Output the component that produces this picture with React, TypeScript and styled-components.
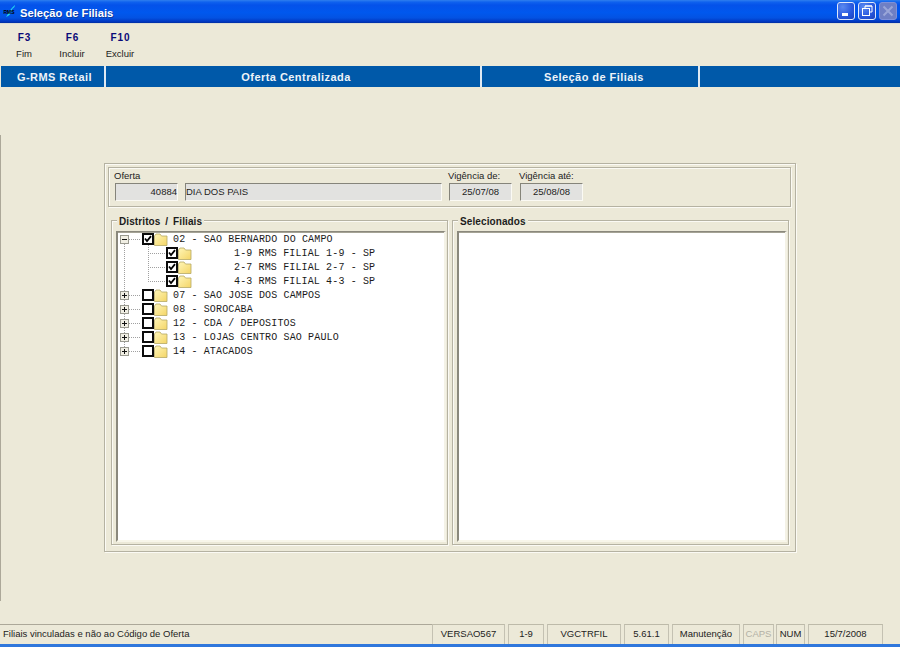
import React from "react";
import styled, { createGlobalStyle } from "styled-components";

const Global = createGlobalStyle`
  html, body { margin: 0; padding: 0; background: #ece9d8; overflow: hidden; }
  * { box-sizing: border-box; }
`;

const Page = styled.div`
  width: 900px; height: 647px; display: flex; flex-direction: column;
  background: #ece9d8; font-family: "Liberation Sans", Arial, sans-serif; color: #111;
`;

const TitleBar = styled.header`
  height: 24px; display: flex; align-items: center; padding: 0 3px 1px 3px;
  background: linear-gradient(180deg, #2f7fee 0%, #0f62ee 9%, #0452ea 22%, #0058ee 55%, #0352e2 78%, #0136bf 94%, #012f9f 100%);
  border-bottom: 1px solid #dcdcd4;
`;
const TitleText = styled.span`
  margin-left: 3px; padding-top: 3px; flex: 1; color: #fff; font-weight: 700; font-size: 11.2px;
  text-shadow: 1px 1px 0 #0b3aa0;
`;
const WinButton = styled.button<{ $off?: boolean }>`
  width: 18px; height: 18px; padding: 0; margin-left: 3px; display: flex; align-items: center; justify-content: center;
  border: 1px solid ${(p) => (p.$off ? "#7f90d8" : "#dfe8fa")}; border-radius: 3px;
  background: ${(p) => p.$off ? "#6f7fc4" : "radial-gradient(circle at 30% 25%, #5b8af0 0%, #2a5ae0 55%, #1a42bd 100%)"};
`;

const Toolbar = styled.nav`
  height: 42px; display: flex;
`;
const Tool = styled.div`
  width: 48px; display: flex; flex-direction: column; align-items: center; padding-top: 7px;
`;
const ToolKey = styled.span`
  height: 13px; line-height: 13px; color: #0a0a78; font-weight: 700; font-size: 10px; letter-spacing: 1px;
  padding-left: 1px;
`;
const ToolName = styled.span`
  margin-top: 4px; height: 12px; line-height: 12px; font-size: 9.5px; color: #222;
`;

const Band = styled.div`
  height: 21px; margin-left: 1px; display: flex; background: #0059a9;
`;
const BandCell = styled.div<{ $w: number; $shift?: number }>`
  width: ${(p) => p.$w}px; flex: none; display: flex; align-items: center; justify-content: center;
  color: #eef3f8; font-weight: 700; font-size: 11px; letter-spacing: 0.45px;
  border-right: 2px solid #dfe9f3; padding-left: ${(p) => p.$shift ?? 0}px;
`;

const Workspace = styled.main`
  margin-top: 48px; height: 466px; border-left: 1px solid #aca899; padding: 28px 0 0 103px;
`;
const OuterPanel = styled.section`
  width: 692px; height: 389px; padding: 3px;
  border: 1px solid #b5b2a2; box-shadow: 1px 1px 0 #fbfaf4, inset 1px 1px 0 #fbfaf4;
`;
const OfferGroup = styled.div`
  width: 683px; height: 40px; display: flex; padding: 2px 0 0 6px;
  border: 1px solid #b5b2a2; box-shadow: 1px 1px 0 #fbfaf4, inset 1px 1px 0 #fbfaf4;
`;
const FieldColumn = styled.div<{ $gap?: number }>`
  margin-right: ${(p) => p.$gap ?? 7}px;
`;
const FieldLabel = styled.div`
  height: 13px; line-height: 12px; font-size: 9.5px; color: #222; margin-left: -1px; white-space: nowrap;
`;
const FieldRow = styled.div`
  display: flex; gap: 7px;
`;
const Field = styled.div<{ $w: number; $align?: string }>`
  width: ${(p) => p.$w}px; height: 18px; line-height: 15px; font-size: 9.5px; color: #222;
  text-align: ${(p) => p.$align ?? "left"}; padding: 0;
  background: #e2e2e0;
  border-style: solid; border-width: 1px; border-color: #85847a #fbfaf4 #fbfaf4 #85847a;
`;
const TreeRow = styled.div`
  display: flex; gap: 4px; margin: 13px 0 0 3px;
`;
const GroupBox = styled.div`
  position: relative; width: 337px; height: 325px; padding: 10px 0 0 4px;
  border: 1px solid #b5b2a2; box-shadow: 1px 1px 0 #fbfaf4, inset 1px 1px 0 #fbfaf4;
`;
const Legend = styled.span`
  position: absolute; top: -5px; left: 5px; padding: 0 2px; background: #ece9d8;
  font-weight: 700; font-size: 10px; line-height: 12px; color: #1c1c1c; letter-spacing: 0.1px; word-spacing: 2px;
`;
const ListBox = styled.div`
  position: relative; width: 330px; height: 311px; background: #fff;
  border-style: solid; border-width: 1px 2px 2px 2px; border-color: #8a887c #f4f2e6 #f8f6ea #8a887c;
  box-shadow: inset 0 1px 0 #a5a395;
`;
const TreeLines = styled.svg`
  position: absolute; left: 0; top: 0;
`;
const Row = styled.div<{ $child?: boolean }>`
  position: relative; height: 14px; display: flex; align-items: center;
  padding-left: ${(p) => (p.$child ? 48 : 2)}px;
`;
const ExpanderGap = styled.span`
  width: 22px; height: 9px; display: flex;
`;
const RowLabel = styled.span<{ $child?: boolean }>`
  margin-left: ${(p) => (p.$child ? 42 : 5)}px; white-space: pre;
  font-family: "Liberation Mono", "Courier New", monospace; font-size: 10px; letter-spacing: 0.14px; color: #1a1a1a;
`;

const Status = styled.footer`
  margin-top: 23px; height: 20px; display: flex;
`;
const StatusText = styled.div`
  width: 432px; flex: none; font-size: 9.5px; line-height: 18px; padding-left: 3px; color: #222;
  border-top: 1px solid #aca899;
`;
const StatusCell = styled.div<{ $w: number; $gap?: number; $dim?: boolean }>`
  width: ${(p) => p.$w}px; flex: none; margin-right: ${(p) => p.$gap ?? 3}px; text-align: center; font-size: 9.5px; line-height: 18px;
  color: ${(p) => (p.$dim ? "#b3b1a6" : "#222")};
  border-top: 1px solid #bdbaa9; border-left: 1px solid #c4c1b2; border-right: 1px solid #c4c1b2;
`;
const BottomEdge = styled.div`
  height: 3px; background: #2f77dc;
`;

const Check = ({ on }: { on: boolean }) => (
  <svg width="12" height="12" viewBox="0 0 12 12" style={{ flex: "none" }}>
    <rect x="1" y="1" width="10" height="10" fill="#fff" stroke="#0c0c0c" strokeWidth="2" />
    {on && <path d="M3 5.5 L5 8 L9 3.2" fill="none" stroke="#000" strokeWidth="1.8" />}
  </svg>
);
const Folder = () => (
  <svg width="14" height="13" viewBox="0 0 14 13" style={{ flex: "none" }}>
    <defs>
      <linearGradient id="fold" x1="0" y1="0" x2="1" y2="1">
        <stop offset="0" stopColor="#fff6b8" />
        <stop offset="1" stopColor="#f4d566" />
      </linearGradient>
    </defs>
    <path d="M0.5 3 L2 1 H6 L7.5 3 H13 V12.5 H0.5 Z" fill="url(#fold)" stroke="#b5a866" strokeWidth="0.8" />
  </svg>
);
const Expander = ({ open }: { open: boolean }) => (
  <svg width="9" height="9" viewBox="0 0 9 9" style={{ flex: "none" }}>
    <rect x="0.5" y="0.5" width="8" height="8" fill="#f1efe4" stroke="#9a9a90" />
    <path d={open ? "M2 4.5 H7" : "M2 4.5 H7 M4.5 2 V7"} stroke="#111" />
  </svg>
);

const parents = [
  "07 - SAO JOSE DOS CAMPOS",
  "08 - SOROCABA",
  "12 - CDA / DEPOSITOS",
  "13 - LOJAS CENTRO SAO PAULO",
  "14 - ATACADOS",
];
const children = ["1-9 RMS FILIAL 1-9 - SP", "2-7 RMS FILIAL 2-7 - SP", "4-3 RMS FILIAL 4-3 - SP"];

const Parent = ({ label, open, on }: { label: string; open: boolean; on: boolean }) => (
  <Row>
    <ExpanderGap><Expander open={open} /></ExpanderGap>
    <Check on={on} />
    <Folder />
    <RowLabel>{label}</RowLabel>
  </Row>
);

export default function App() {
  return (
    <Page>
      <Global />
      <TitleBar>
        <svg width="14" height="14" viewBox="0 0 14 14" style={{ flex: "none" }}>
          <path d="M3 13 C6 9 7 5 12 1 C12 4 9 4 8.5 7 C8 10 6 12 3 13 Z" fill="#23d4ee" />
          <text x="0.5" y="10" fontSize="5" fontWeight="700" fontFamily="Liberation Sans" fill="#000">RMS</text>
        </svg>
        <TitleText>Seleção de Filiais</TitleText>
        <WinButton aria-label="Minimizar">
          <svg width="12" height="12" viewBox="0 0 12 12"><rect x="2" y="8" width="6" height="3" fill="#fff" /></svg>
        </WinButton>
        <WinButton aria-label="Restaurar">
          <svg width="12" height="12" viewBox="0 0 12 12">
            <path d="M4 3 V1 H11 V7 H9" fill="none" stroke="#fff" />
            <rect x="1.5" y="3.5" width="7" height="7" fill="none" stroke="#fff" />
            <path d="M1 3.5 H9 M4 1 H11" stroke="#fff" />
          </svg>
        </WinButton>
        <WinButton $off aria-label="Fechar">
          <svg width="12" height="12" viewBox="0 0 12 12"><path d="M1.5 1.5 L10.5 10.5 M10.5 1.5 L1.5 10.5" stroke="#9aa6d8" strokeWidth="2" /></svg>
        </WinButton>
      </TitleBar>

      <Toolbar>
        <Tool><ToolKey>F3</ToolKey><ToolName>Fim</ToolName></Tool>
        <Tool><ToolKey>F6</ToolKey><ToolName>Incluir</ToolName></Tool>
        <Tool><ToolKey>F10</ToolKey><ToolName>Excluir</ToolName></Tool>
      </Toolbar>

      <Band>
        <BandCell $w={105} $shift={4}>G-RMS Retail</BandCell>
        <BandCell $w={376} $shift={6}>Oferta Centralizada</BandCell>
        <BandCell $w={218} $shift={8}>Seleção de Filiais</BandCell>
      </Band>

      <Workspace>
        <OuterPanel>
          <OfferGroup>
            <FieldColumn>
              <FieldLabel>Oferta</FieldLabel>
              <FieldRow>
                <Field $w={63} $align="right">40884</Field>
                <Field $w={257}>DIA DOS PAIS</Field>
              </FieldRow>
            </FieldColumn>
            <FieldColumn $gap={8}>
              <FieldLabel>Vigência de:</FieldLabel>
              <Field $w={63} $align="center">25/07/08</Field>
            </FieldColumn>
            <FieldColumn>
              <FieldLabel>Vigência até:</FieldLabel>
              <Field $w={63} $align="center">25/08/08</Field>
            </FieldColumn>
          </OfferGroup>
          <TreeRow>
            <GroupBox>
              <Legend>Distritos / Filiais</Legend>
              <ListBox>
                <TreeLines width="60" height="130" viewBox="0 0 60 130">
                  <g stroke="#a0a0a0" strokeDasharray="1 1" shapeRendering="crispEdges" fill="none">
                    <path d="M6.5 12 V119" />
                    <path d="M30.5 13 V49" />
                    <path d="M11 7.5 H23" />
                    <path d="M30 21.5 H47 M30 35.5 H47 M30 49.5 H47" />
                    <path d="M11 63.5 H23 M11 77.5 H23 M11 91.5 H23 M11 105.5 H23 M11 119.5 H23" />
                  </g>
                </TreeLines>
                <Parent label="02 - SAO BERNARDO DO CAMPO" open on />
                {children.map((c) => (
                  <Row $child key={c}>
                    <Check on />
                    <Folder />
                    <RowLabel $child>{c}</RowLabel>
                  </Row>
                ))}
                {parents.map((p) => (
                  <Parent key={p} label={p} open={false} on={false} />
                ))}
              </ListBox>
            </GroupBox>
            <GroupBox>
              <Legend>Selecionados</Legend>
              <ListBox />
            </GroupBox>
          </TreeRow>
        </OuterPanel>
      </Workspace>

      <Status>
        <StatusText>Filiais vinculadas e não ao Código de Oferta</StatusText>
        <StatusCell $w={73}>VERSAO567</StatusCell>
        <StatusCell $w={36}>1-9</StatusCell>
        <StatusCell $w={74}>VGCTRFIL</StatusCell>
        <StatusCell $w={45}>5.61.1</StatusCell>
        <StatusCell $w={68}>Manutenção</StatusCell>
        <StatusCell $w={31} $gap={2} $dim>CAPS</StatusCell>
        <StatusCell $w={29}>NUM</StatusCell>
        <StatusCell $w={75}>15/7/2008</StatusCell>
      </Status>
      <BottomEdge />
    </Page>
  );
}
